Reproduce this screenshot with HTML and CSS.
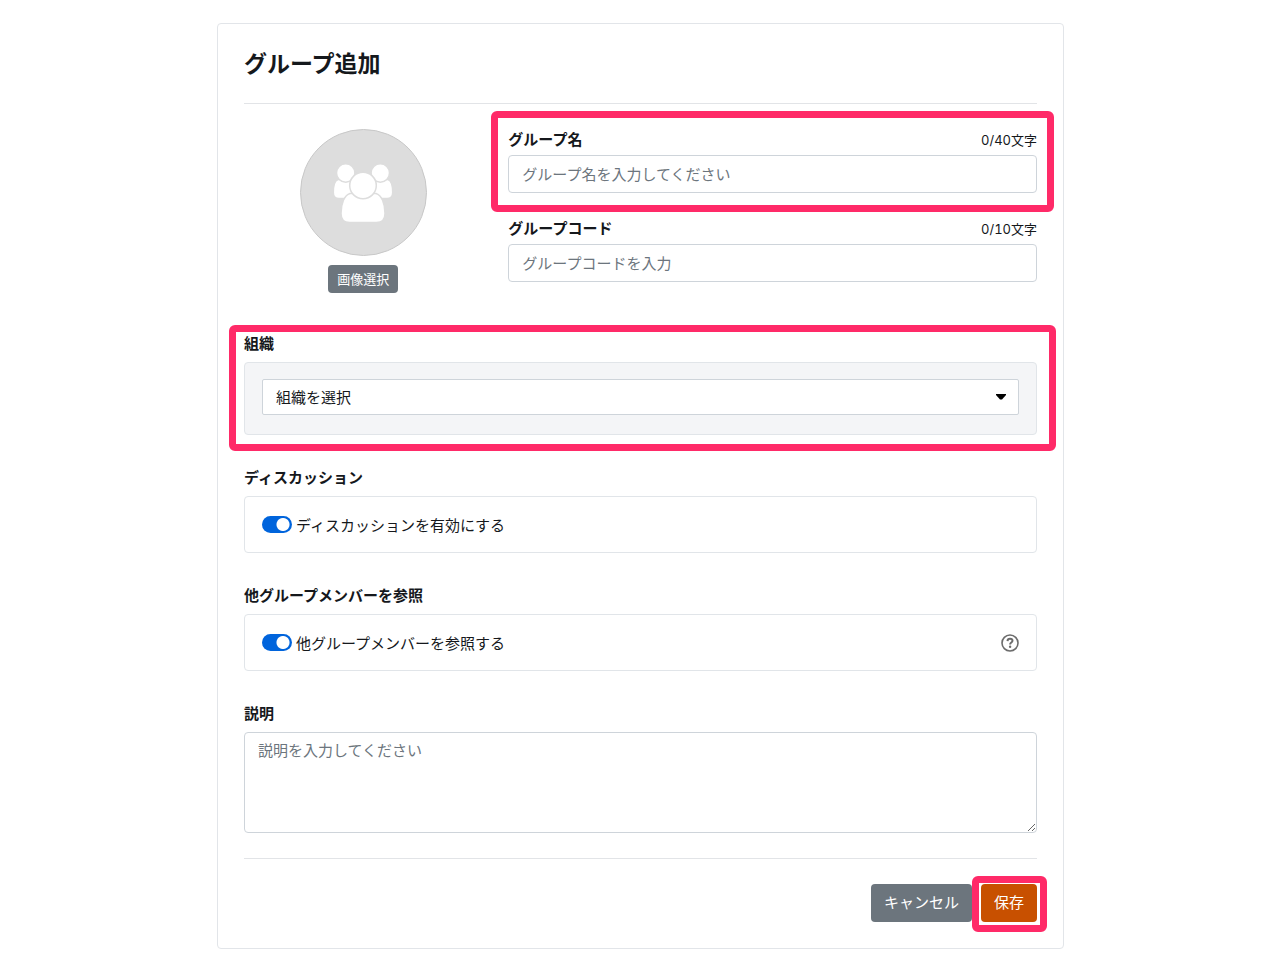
FILE: index.html
```html
<!DOCTYPE html>
<html lang="ja">
<head>
<meta charset="utf-8">
<meta name="viewport" content="width=device-width, initial-scale=1">
<title>グループ追加</title>
<link rel="stylesheet" href="styles.css">
</head>
<body>
<main class="page">
  <form class="card">
    <h1 class="title">グループ追加</h1>

    <div class="basic">
      <div class="avatar-column">
        <div class="avatar">
          <svg class="avatar-icon" viewBox="0 0 60 60" width="60" height="60" aria-hidden="true">
            <g fill="#fff" stroke="#ddd" stroke-width="1.500">
              <path d="M5 16.500h19v19H6q-5.700 0-5.700-6C.3 23 2 17.500 5 16.500z"/>
              <path d="M55 16.500H36v19h18q5.700 0 5.700-6C59.700 23 58 17.500 55 16.500z"/>
              <circle cx="12.700" cy="10" r="9.200"/>
              <circle cx="47.300" cy="10" r="9.200"/>
              <path d="M17 30.500h26c5.500 1.500 9 10 9 20 0 6-3 9-8.500 9h-27c-5.500 0-8.500-3-8.500-9C8 40.500 11.500 32 17 30.500z"/>
              <circle cx="30" cy="22.500" r="13.300"/>
            </g>
          </svg>
        </div>
        <button type="button" class="btn btn-small">画像選択</button>
      </div>

      <div class="basic-fields">
        <div class="field highlight highlight-name">
          <div class="label-row">
            <label class="label" for="group-name">グループ名</label>
            <span class="counter">0/40文字</span>
          </div>
          <input class="control" id="group-name" type="text" maxlength="40" placeholder="グループ名を入力してください">
        </div>
        <div class="field">
          <div class="label-row">
            <label class="label" for="group-code">グループコード</label>
            <span class="counter">0/10文字</span>
          </div>
          <input class="control" id="group-code" type="text" maxlength="10" placeholder="グループコードを入力">
        </div>
      </div>
    </div>

    <section class="section highlight highlight-org">
      <label class="label" for="org">組織</label>
      <div class="panel panel-filled">
        <div class="select-wrap">
          <select class="select" id="org"><option>組織を選択</option></select>
          <svg class="caret" viewBox="0 0 10 6" width="10" height="6" aria-hidden="true"><path d="M0 0h10v1L6 5.500H4L0 1z"/></svg>
        </div>
      </div>
    </section>

    <section class="section">
      <h2 class="label">ディスカッション</h2>
      <div class="panel">
        <label class="switch"><input class="toggle" type="checkbox" checked>ディスカッションを有効にする</label>
      </div>
    </section>

    <section class="section">
      <h2 class="label">他グループメンバーを参照</h2>
      <div class="panel">
        <label class="switch"><input class="toggle" type="checkbox" checked>他グループメンバーを参照する</label>
        <button type="button" class="help" aria-label="ヘルプ">
          <svg viewBox="0 0 18 18" width="18" height="18" fill="none" stroke="#6c6c6c" aria-hidden="true">
            <circle cx="9" cy="9" r="8" stroke-width="1.600"/>
            <path d="M6.500 7.100C6.600 5.500 7.600 4.800 9 4.800c1.500 0 2.500.8 2.500 2 0 1.800-2.400 1.700-2.400 3.600" stroke-width="2"/>
            <circle cx="9.100" cy="12.700" r="1.200" fill="#6c6c6c" stroke="none"/>
          </svg>
        </button>
      </div>
    </section>

    <section class="section">
      <label class="label" for="description">説明</label>
      <textarea class="control description" id="description" placeholder="説明を入力してください"></textarea>
    </section>

    <div class="actions">
      <button type="button" class="btn">キャンセル</button>
      <div class="highlight highlight-save"><button type="submit" class="btn btn-primary">保存</button></div>
    </div>
  </form>
</main>
</body>
</html>
```
FILE: styles.css
```css
* {
  box-sizing: border-box;
}

body {
  margin: 0;
  background: #fff;
  color: #15181c;
  font-family: "Noto Sans CJK JP", sans-serif;
  font-size: 15px;
  line-height: 22px;
}

button,
input,
select,
textarea {
  font: inherit;
  color: inherit;
}

.page {
  padding: 23px 224px 25px 217px;
}

.card {
  padding: 25px 26px 26px;
  border: 1px solid #e2e5e9;
  border-radius: 4px;
}

.title {
  margin: 0 0 25px;
  padding-bottom: 28px;
  border-bottom: 1px solid #e2e4e7;
  font-size: 23px;
  font-weight: 700;
  line-height: 26px;
}

.basic {
  display: grid;
  grid-template-columns: 1fr 2fr;
  margin-bottom: 40px;
}

.avatar-column {
  display: flex;
  flex-direction: column;
  align-items: center;
  gap: 9px;
  padding-right: 26px;
}

.avatar {
  display: grid;
  place-items: center;
  width: 127px;
  height: 127px;
  border: 1px solid #c8c8c8;
  border-radius: 50%;
  background: #ddd;
}

.avatar-icon {
  display: block;
}

.basic-fields {
  display: flex;
  flex-direction: column;
  gap: 25px;
}

.label-row {
  display: flex;
  justify-content: space-between;
  align-items: baseline;
  height: 22px;
  margin-bottom: 4px;
}

.label {
  display: block;
  margin: 0;
  font-size: 15px;
  font-weight: 700;
  line-height: 20px;
}

.counter {
  font-family: Inter, "Noto Sans CJK JP", sans-serif;
  font-size: 13px;
  font-variant-numeric: tabular-nums;
}

.control {
  display: block;
  width: 100%;
  height: 38px;
  padding: 0 13px 2px;
  border: 1px solid #ced4da;
  border-radius: 4px;
  background: #fff;
}

.control::placeholder {
  color: #6c757d;
  opacity: 1;
}

.section {
  display: flex;
  flex-direction: column;
  gap: 9px;
  margin-bottom: 32px;
}

.section:last-of-type {
  margin-bottom: 25px;
}

.panel {
  display: flex;
  align-items: center;
  justify-content: space-between;
  padding: 16px 17px;
  border: 1px solid #e1e5e9;
  border-radius: 4px;
  min-height: 57px;
}

.panel-filled {
  padding: 16px 17px 19px;
  background: #f4f5f7;
}

.select-wrap {
  position: relative;
  flex: 1;
}

.select {
  display: block;
  width: 100%;
  height: 36px;
  padding: 0 32px 0 13px;
  border: 1px solid #ced4da;
  border-radius: 2px;
  background: #fff;
  appearance: none;
}

.caret {
  position: absolute;
  top: 15px;
  right: 13px;
  pointer-events: none;
}

.switch {
  display: flex;
  align-items: center;
  gap: 4px;
}

.toggle {
  width: 30px;
  height: 17px;
  margin: 0;
  border-radius: 9px;
  background: radial-gradient(circle at 21px 50%, #fff 6px, #0064dc 7px);
  appearance: none;
}

.toggle:not(:checked) {
  background: radial-gradient(circle at 9px 50%, #fff 6px, #adb5bd 7px);
}

.help {
  padding: 0;
  border: 0;
  background: none;
  line-height: 0;
}

.description {
  height: 101px;
  padding: 6px 13px;
  resize: vertical;
}

.actions {
  display: flex;
  justify-content: flex-end;
  gap: 9px;
  padding-top: 25px;
  border-top: 1px solid #e2e4e7;
}

.btn {
  height: 38px;
  padding: 0 13px 2px;
  border: 0;
  border-radius: 4px;
  background: #6c757d;
  color: #fff;
}

.btn-small {
  height: 28px;
  padding: 0 9px 1px;
  font-size: 13px;
}

.btn-primary {
  background: #c85000;
}

.highlight {
  position: relative;
}

.highlight::after {
  content: "";
  position: absolute;
  border: 7px solid #ff2a68;
  border-radius: 6px;
  pointer-events: none;
}

.highlight-name::after {
  inset: -18px -17px -19px;
}

.highlight-org::after {
  inset: -8px -19px -16px -15px;
}

.highlight-save::after {
  inset: -8px -10px -10px -9px;
}
```
